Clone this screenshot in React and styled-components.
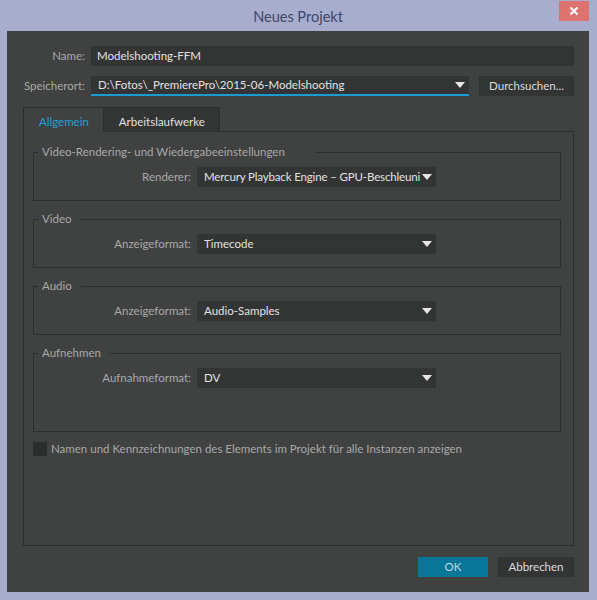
import React from 'react'
import styled, { createGlobalStyle } from 'styled-components'

const GlobalStyle = createGlobalStyle`
  html, body {
    margin: 0;
    padding: 0;
    background: #a8accd;
  }
  * {
    box-sizing: border-box;
  }
`

const Arrow = () => (
  <svg width="10" height="6" viewBox="0 0 10 6">
    <polygon points="0,0 10,0 5,6" fill="#e6e6e6" />
  </svg>
)

export default () => (
  <Window>
    <GlobalStyle />
    <TitleBar>
      <span />
      <Title>Neues Projekt</Title>
      <CloseButton>
        <svg width="10" height="10" viewBox="0 0 10 10">
          <path d="M1.5 1.5 L8.5 8.5 M8.5 1.5 L1.5 8.5" stroke="#fff" strokeWidth="2" />
        </svg>
      </CloseButton>
    </TitleBar>
    <Body>
      <Form>
        <Label>Name:</Label>
        <TextInput>Modelshooting-FFM</TextInput>
        <Label>Speicherort:</Label>
        <Line>
          <Dropdown focused>
            <span>D:\Fotos\_PremierePro\2015-06-Modelshooting</span>
            <Arrow />
          </Dropdown>
          <Button width={95}>Durchsuchen...</Button>
        </Line>
      </Form>

      <Tabs>
        <Tab active>Allgemein</Tab>
        <Tab>Arbeitslaufwerke</Tab>
      </Tabs>

      <Panel>
        <Group>
          <legend className="wide">Video-Rendering- und Wiedergabeeinstellungen</legend>
          <FieldRow>
            <Label>Renderer:</Label>
            <Dropdown tight>
              <span>Mercury Playback Engine – GPU-Beschleuni</span>
              <Arrow />
            </Dropdown>
          </FieldRow>
        </Group>
        <Group>
          <legend>Video</legend>
          <FieldRow>
            <Label>Anzeigeformat:</Label>
            <Dropdown>
              <span>Timecode</span>
              <Arrow />
            </Dropdown>
          </FieldRow>
        </Group>
        <Group>
          <legend>Audio</legend>
          <FieldRow>
            <Label>Anzeigeformat:</Label>
            <Dropdown>
              <span>Audio-Samples</span>
              <Arrow />
            </Dropdown>
          </FieldRow>
        </Group>
        <Group tall>
          <legend>Aufnehmen</legend>
          <FieldRow>
            <Label>Aufnahmeformat:</Label>
            <Dropdown>
              <span>DV</span>
              <Arrow />
            </Dropdown>
          </FieldRow>
        </Group>
        <CheckRow>
          <Checkbox />
          <span>Namen und Kennzeichnungen des Elements im Projekt für alle Instanzen anzeigen</span>
        </CheckRow>
      </Panel>

      <Footer>
        <Button width={70} primary>OK</Button>
        <Button width={76}>Abbrechen</Button>
      </Footer>
    </Body>
  </Window>
)

const Window = styled.div`
  width: 597px;
  height: 600px;
  padding: 0 8px 8px 7px;
  display: flex;
  flex-direction: column;
  background: #a8accd;
  font-family: Lato, 'Noto Sans', sans-serif;
  font-size: 11.5px;
`

const TitleBar = styled.div`
  height: 31px;
  display: grid;
  grid-template-columns: 1fr auto 1fr;
`

const Title = styled.div`
  padding-top: 7px;
  line-height: 20px;
  font-size: 14.5px;
  color: #3b486a;
`

const CloseButton = styled.div`
  justify-self: end;
  margin-top: 1px;
  width: 30px;
  height: 20px;
  background: #dc736f;
  display: flex;
  align-items: center;
  justify-content: center;
`

const Body = styled.div`
  flex: 1;
  display: flex;
  flex-direction: column;
  padding: 15px 15px 15px 16px;
  background: #404141;
  color: #a9a9a9;
`

const Form = styled.div`
  display: grid;
  grid-template-columns: 62px 1fr;
  column-gap: 6px;
  row-gap: 10px;
`

const Label = styled.div`
  text-align: right;
  line-height: 20px;
  color: #a9a9a9;
  white-space: nowrap;
`

const TextInput = styled.div`
  height: 20px;
  line-height: 20px;
  padding: 0 6px;
  background: #333434;
  color: #e2e2e2;
`

const Line = styled.div`
  display: flex;
  gap: 10px;
`

const Dropdown = styled.div`
  flex: 1;
  height: 20px;
  display: flex;
  align-items: center;
  padding: 0 4px 0 7px;
  background: #333434;
  color: #e2e2e2;
  border-bottom: ${p => (p.focused ? '2px solid #1b9bd2' : 'none')};
  span {
    flex: 1;
    overflow: hidden;
    white-space: nowrap;
    line-height: 20px;
    letter-spacing: ${p => (p.tight ? '-0.15px' : 'normal')};
  }
  svg {
    flex: none;
  }
`

const Button = styled.div`
  width: ${p => p.width}px;
  height: 20px;
  line-height: 20px;
  text-align: center;
  background: ${p => (p.primary ? '#067798' : '#333434')};
  color: ${p => (p.primary ? '#c4d9e2' : '#dcdcdc')};
`

const Tabs = styled.div`
  display: flex;
  margin-top: 10px;
  height: 25px;
`

const Tab = styled.div`
  padding: 4px 14px 0 15px;
  line-height: 20px;
  background: ${p => (p.active ? '#404141' : '#333434')};
  color: ${p => (p.active ? '#22a0d8' : '#e0e0e0')};
  border: 1px solid #2d2e2e;
  border-bottom: none;
  border-left-width: ${p => (p.active ? '1px' : '0')};
  position: relative;
  top: 1px;
  z-index: 1;
`

const Panel = styled.div`
  flex: 1;
  display: flex;
  flex-direction: column;
  gap: 10px;
  padding: 12px 12px 0 9px;
  border: 1px solid #2d2e2e;
`

const Group = styled.fieldset`
  margin: 0;
  min-width: 0;
  padding: 7px 0 ${p => (p.tall ? 43 : 13)}px 0;
  border: 1px solid #2d2e2e;
  legend {
    margin-left: 4px;
    padding: 0 9px 0 4px;
    line-height: 16px;
    color: #a9a9a9;
  }
  legend.wide {
    padding-right: 31px;
  }
`

const FieldRow = styled.div`
  display: grid;
  grid-template-columns: 157px 239px;
  column-gap: 6px;
`

const CheckRow = styled.div`
  display: flex;
  align-items: center;
  gap: 4px;
  line-height: 14px;
  color: #a9a9a9;
`

const Checkbox = styled.div`
  width: 14px;
  height: 14px;
  background: #2c2d2d;
`

const Footer = styled.div`
  display: flex;
  justify-content: flex-end;
  gap: 10px;
  margin-top: 11px;
`
